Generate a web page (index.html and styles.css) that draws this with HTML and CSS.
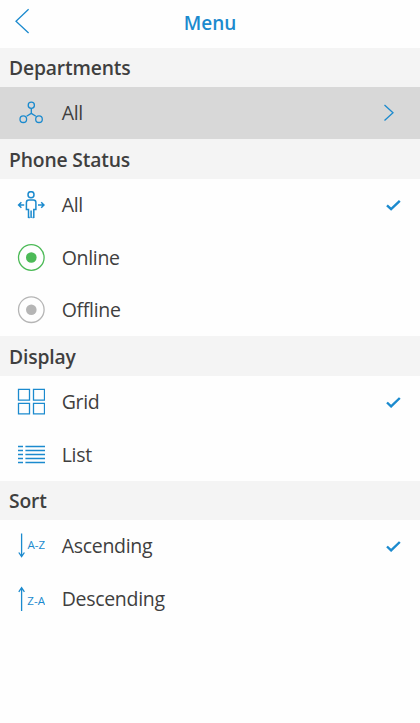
FILE: index.html
```html
<!DOCTYPE html>
<html lang="en">
<head>
  <meta charset="UTF-8" />
  <meta name="viewport" content="width=device-width, initial-scale=1.0"/>
  <title>Menu</title>
  <link rel="stylesheet" href="styles.css">
</head>
<body>
<header class="topbar">
  <a class="back" href="#" aria-label="Back">
    <svg width="16" height="26" viewBox="0 0 16 26"><path d="M13.6 1.3 L1 13.2 L13.6 25"/></svg>
  </a>
  <h1>Menu</h1>
</header>

<main>
  <h2>Departments</h2>
  <ul>
    <li class="active">
      <svg class="icon" viewBox="0 0 28 28">
        <circle cx="14.3" cy="6.3" r="3.1"/>
        <circle cx="6.3" cy="20.2" r="3.3"/>
        <circle cx="22" cy="20.2" r="3.3"/>
        <path d="M14.3 9.4 V14.4 L9.6 17.3 M14.3 14.4 L18.9 17.3"/>
      </svg>
      <span>All</span>
      <svg class="arrow" width="12" height="18" viewBox="0 0 12 18"><path d="M1.5 1 L10 8.8 L1.5 16.6"/></svg>
    </li>
  </ul>

  <h2>Phone Status</h2>
  <ul>
    <li>
      <svg class="icon person" viewBox="0 0 28 28">
        <circle cx="14" cy="3.7" r="3"/>
        <path d="M11.5 27 V18.5 H9.4 V11.5 Q9.4 9 11.9 9 H16.4 Q18.9 9 18.9 11.5 V18.5 H16.8 V27 M11.5 26.5 H12.8 M15.5 26.5 H16.8 M14.1 19.5 V27"/>
        <path d="M7.2 14 H1.6 M4.4 11.3 L1.6 14 L4.4 16.7 M21 14 H27 M24.2 11.3 L27 14 L24.2 16.7"/>
      </svg>
      <span>All</span>
      <svg class="check" width="15" height="12" viewBox="0 0 15 12"><path d="M1 6.3 L5.1 10.2 L13.8 1.8"/></svg>
    </li>
    <li>
      <svg class="icon online" viewBox="0 0 28 28"><circle cx="14.3" cy="13.5" r="12.8"/><circle class="dot" cx="14.3" cy="13.5" r="5.3"/></svg>
      <span>Online</span>
    </li>
    <li>
      <svg class="icon offline" viewBox="0 0 28 28"><circle cx="14.3" cy="13.7" r="12.8"/><circle class="dot" cx="14.3" cy="13.7" r="5.3"/></svg>
      <span>Offline</span>
    </li>
  </ul>

  <h2>Display</h2>
  <ul>
    <li>
      <svg class="icon" viewBox="0 0 28 28">
        <path d="M1.5 1.4 H12.5 V12.1 H1.5 Z M16.5 1.4 H27.5 V12.1 H16.5 Z M1.5 15.4 H12.5 V25.8 H1.5 Z M16.5 15.4 H27.5 V25.8 H16.5 Z"/>
      </svg>
      <span>Grid</span>
      <svg class="check" width="15" height="12" viewBox="0 0 15 12"><path d="M1 6.5 L5.1 10.4 L13.8 2"/></svg>
    </li>
    <li>
      <svg class="icon list" viewBox="0 0 28 28">
        <path d="M1 5.5 H6 M1 9.5 H6 M1 13.5 H6 M1 17.5 H6 M1 21.5 H6 M8.4 5.5 H28 M8.4 9.5 H28 M8.4 13.5 H28 M8.4 17.5 H28 M8.4 21.5 H28"/>
      </svg>
      <span>List</span>
    </li>
  </ul>

  <h2>Sort</h2>
  <ul>
    <li>
      <svg class="icon" viewBox="0 0 28 28">
        <path d="M4.6 1.5 V24.5 M1.8 20.5 L4.6 24.7 L7.4 20.5"/>
        <text x="10.6" y="16.8" textLength="17.4">A-Z</text>
      </svg>
      <span>Ascending</span>
      <svg class="check" width="15" height="12" viewBox="0 0 15 12"><path d="M1 6.5 L5.1 10.4 L13.8 2"/></svg>
    </li>
    <li>
      <svg class="icon" viewBox="0 0 28 28">
        <path d="M4.6 26 V2.6 M1.8 6.8 L4.6 2.6 L7.4 6.8"/>
        <text x="10.2" y="19.6" textLength="17.8">Z-A</text>
      </svg>
      <span>Descending</span>
    </li>
  </ul>
</main>
</body>
</html>
```
FILE: styles.css
```css
body {
  margin: 0;
  background: #fefefe;
  color: #3f3f3f;
  font-family: "Open Sans", sans-serif;
}
svg {
  fill: none;
  stroke: #1b8ace;
  stroke-width: 1.3;
}
.topbar {
  display: grid;
  grid-template-columns: 60px 1fr 60px;
  align-items: center;
  height: 47.6px;
}
.back {
  padding-left: 15px;
  padding-bottom: 5px;
  line-height: 0;
}
h1 {
  margin: 0;
  padding-bottom: 2px;
  font-size: 19px;
  font-weight: 600;
  text-align: center;
  color: #1b8ace;
}
h2 {
  box-sizing: border-box;
  margin: 0;
  padding: 1.2px 0 0 9px;
  height: 39.4px;
  line-height: 38.2px;
  font-size: 19.3px;
  font-weight: 600;
  letter-spacing: -0.15px;
  background: #f4f4f4;
}
ul {
  margin: 0;
  padding: 0;
  list-style: none;
}
li {
  display: flex;
  align-items: center;
  height: 52.5px;
  padding: 0 19px 0 17px;
  font-size: 19.5px;
  letter-spacing: -0.3px;
}
li span {
  flex: 1;
  margin-left: 16.7px;
  margin-bottom: 1px;
}
.active {
  background: #d8d8d8;
}
.icon {
  width: 28px;
  height: 28px;
}
.icon text {
  fill: #1b8ace;
  stroke: none;
  font-size: 11.5px;
  font-weight: 500;
  letter-spacing: 0;
}
.person {
  stroke-width: 1.5;
}
.list {
  stroke-width: 1.5;
}
.arrow {
  margin-right: 6px;
}
.check {
  stroke-width: 2.4;
}
.online {
  stroke: #4cba57;
}
.online .dot {
  fill: #4cba57;
  stroke: none;
}
.offline {
  stroke: #b5b5b5;
}
.offline .dot {
  fill: #b5b5b5;
  stroke: none;
}
```
